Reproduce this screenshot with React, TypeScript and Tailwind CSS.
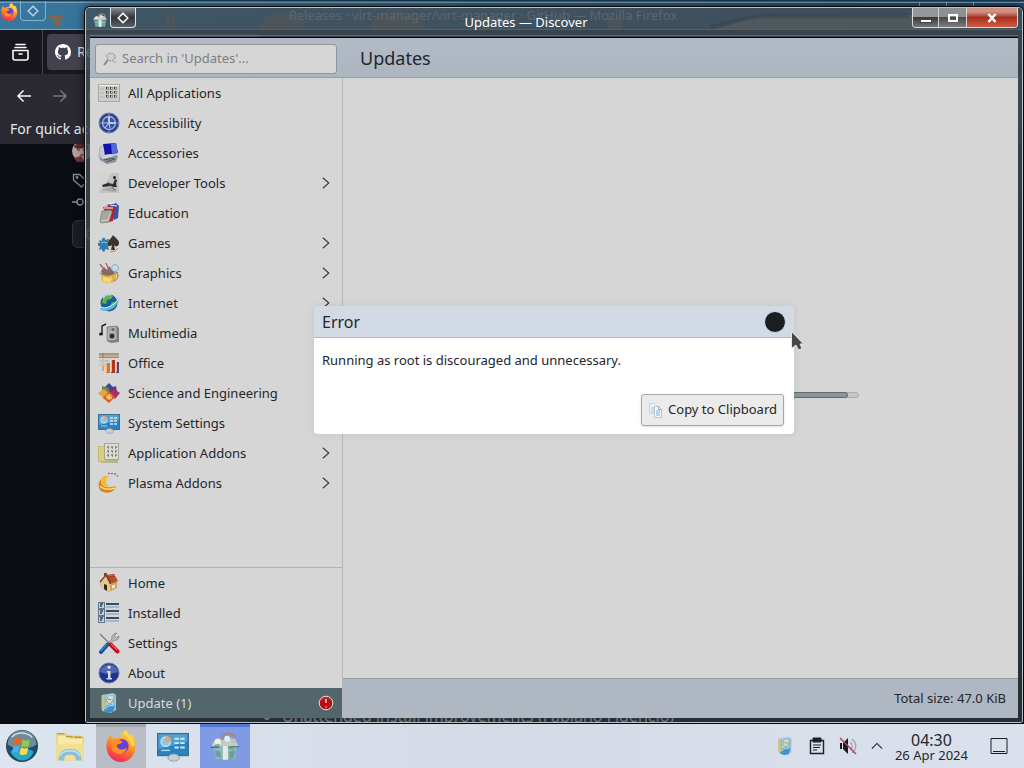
import React from 'react';

type IconProps = { name: string; className?: string };

const shapes: Record<string, React.ReactNode> = {
  grid: (
    <>
      <rect x="0.5" y="2.5" width="21" height="17" fill="#cdccc8" stroke="#a9a8a2" />
      <path d="M1 3.5h20" stroke="#f2f2ee" />
      <path d="M2 7h4M2 11h4M2 15h4" stroke="#aeb4bb" />
      {[6, 10, 14].map((y) =>
        [8, 12, 16].map((x) => (
          <g key={`${x}-${y}`}>
            <rect x={x} y={y - 1} width="3" height="3" fill="#96907f" />
            <rect x={x} y={y - 1} width="1" height="2" fill="#35353a" />
            <rect x={x + 1} y={y} width="1" height="1" fill="#d9cfa5" />
          </g>
        )),
      )}
    </>
  ),
  access: (
    <>
      <circle cx="11" cy="11" r="10" fill="#2c4390" stroke="#6d7dae" />
      <circle cx="11" cy="11" r="6.5" fill="#3353a3" stroke="#a9b8dc" strokeWidth="1.3" />
      <path d="M11 5v6h6" stroke="#e6ecf8" strokeWidth="1.6" fill="none" />
      <path d="M11 11l-4 5M5 11h6l1 5" stroke="#b9c6e4" strokeWidth="1.1" fill="none" />
      <path d="M11 1v3M11 18v3M1 11h3M18 11h3" stroke="#7f90c4" />
    </>
  ),
  accessories: (
    <>
      <path d="M2 5l5-2v10l-6 2z" fill="#c3ccd9" stroke="#8c96a5" strokeWidth=".6" />
      <path d="M5 2l13-1 2 10-13 2z" fill="#1014a6" />
      <path d="M13 1.5l5-.5 2 10-6 1z" fill="#5068dc" />
      <path d="M1 14l12-2 7 2-2 6-9 2-7-4z" fill="#8b929b" />
      <path d="M1 14l12-2 4 2-12 3z" fill="#ccd2d9" />
      <path d="M6 18l10-2M8 20l9-3" stroke="#52565d" />
    </>
  ),
  dev: (
    <>
      <rect x="1" y="1" width="20" height="20" fill="#c3c3c1" />
      <path d="M1 1h13L3 18H1z" fill="#d3d3d1" />
      <path d="M4 13l6-2 5 1 2-5 2 1-1 4 1 3-3 0-3-1-8 1z" fill="#2b2d2e" />
      <path d="M3 18l9-3 8 3-3 2z" fill="#a4a8aa" />
      <circle cx="16.500" cy="5.500" r="1.500" fill="#222" />
      <path d="M10 10l7 8" stroke="#555a5b" />
    </>
  ),
  education: (
    <>
      <path d="M9 2l9-1 3 3-1 12-4 2z" fill="#3453a4" />
      <path d="M9 2l8-1M12 3l7 1" stroke="#eef1f8" />
      <path d="M5 5l9-1 3 2-2 13-4 1z" fill="#b7242e" />
      <path d="M6 6l9 0" stroke="#fff" />
      <path d="M4 9l8-1 2 1-3 11-8 1-1-2z" fill="#a6a79f" stroke="#777b76" strokeWidth=".7" />
      <path d="M3 19l7-1 3-8" stroke="#d3d3cd" fill="none" />
    </>
  ),
  games: (
    <>
      <path d="M9 12c-1-4 4-8 9-6 4 3 2 12-3 14-3 0-6-3-6-8z" fill="#dcd6bf" />
      <path d="M1 8l3 1c-1-4 4-4 3-1l4-1-1 4c4-1 4 4 0 3l1 4-4-1c1 4-4 3-3 0l-3 1 1-4c-4 0-3-4 0-3z" fill="#347cae" />
      <path d="M3 11l3-1 3 1" stroke="#8dc3df" fill="none" />
      <path d="M15 3c2 3 7 5 6 9-1 3-4 3-5 1l1 5h-4l1-5c-2 2-5 1-4-2 0-3 4-5 5-8z" fill="#39352c" />
      <path d="M12 20l5-1 3-3" stroke="#c28b3c" fill="none" />
    </>
  ),
  graphics: (
    <>
      <path d="M3 9l3-4 3 3 2-4 3 4 3-2 1 3-4 4H5z" fill="#73688a" />
      <path d="M2 2l7 9M8 1l4 9M5 8l8 3" stroke="#a3664e" strokeWidth="1.300" />
      <circle cx="17" cy="6" r="3.500" fill="#c4dce6" stroke="#8db0c0" />
      <path d="M3 11c4 3 12 3 16-1l-2 9c-4 3-10 3-13 0z" fill="#dfb246" />
      <path d="M5 14c3 2 7 2 9 1l-1 5c-3 1-6 1-8-1z" fill="#f1d87e" />
      <path d="M2 11c6 4 13 2 17-1 2 4 1 7-3 9" stroke="#9c7224" fill="none" />
    </>
  ),
  internet: (
    <>
      <circle cx="11" cy="11" r="8.5" fill="#155f9d" />
      <path d="M5 6c3-4 8-4 10-2l-2 3-4 1-1 4-4-1zM14 10l4 0-1 5-4 3-1-4z" fill="#65ad52" />
      <path d="M5 6c2-3 5-4 8-3" stroke="#a3dbee" strokeWidth="1.5" fill="none" />
      <path d="M2 15c5 3 17-3 18-9 3 5-7 13-13 13-3 0-5-1-5-4z" fill="#5cb8df" />
      <path d="M2 15c6 3 15-2 18-8" stroke="#d9f2fb" fill="none" />
    </>
  ),
  multimedia: (
    <>
      <path d="M9 5l10-1 2 2v14l-8 1-4-2z" fill="#7d8082" />
      <path d="M9 5l10-1v14l-10 1z" fill="#a9acad" stroke="#74777a" strokeWidth=".7" />
      <circle cx="14" cy="14" r="3.600" fill="#55595c" stroke="#d4d5d6" />
      <circle cx="14" cy="14" r="1.500" fill="#17191a" />
      <circle cx="15" cy="7.500" r="1.500" fill="#65696b" />
      <path d="M4 12V4l4-2" stroke="#222" strokeWidth="1.400" fill="none" />
      <ellipse cx="3" cy="12" rx="2" ry="1.600" fill="#222" />
    </>
  ),
  office: (
    <>
      <path d="M1 1h20v4H1z" fill="#bfae90" />
      <path d="M1 5.500h20M1 2h20M1 9h9M1 13h7M5 1v18" stroke="#8d7a61" strokeWidth=".8" />
      <path d="M1 6h7v8H1z" fill="#d8cfc0" opacity=".7" />
      <path d="M8 11h4v10H8z" fill="#de7626" />
      <path d="M13 8h4v13h-4z" fill="#b43224" />
      <path d="M18 10h3v11h-3z" fill="#354f93" />
      <path d="M8.500 11v9M13.500 8v12M18.500 10v10" stroke="#f3b37b" />
    </>
  ),
  science: (
    <>
      <path d="M11 1l5 5-5 6-5-6z" fill="#344c9b" />
      <path d="M4 4l7 2v7l-7-3z" fill="#7a8151" />
      <path d="M18 4l-6 2v7l7-3z" fill="#5d3a85" />
      <path d="M0 11l6-4 6 5-6 5z" fill="#ddab36" />
      <path d="M22 11l-6-4-5 5 6 5z" fill="#a82d69" />
      <path d="M11 9l6 6-6 6-6-5z" fill="#d95a28" />
      <circle cx="11" cy="15" r="3" fill="#f19b38" />
      <path d="M11 12v5M8 15l6 1" stroke="#ffe2a0" strokeWidth=".8" />
    </>
  ),
  system: (
    <>
      <rect x="0.5" y="2.5" width="21" height="15" fill="#2b83bd" stroke="#3a6f98" />
      <path d="M1 3h20v5L1 13z" fill="#51a0cf" />
      <circle cx="6" cy="8" r="3.200" fill="#8cc6e4" stroke="#c4e3f2" />
      <path d="M6 8V4c2 0 4 2 4 4z" fill="#e0a573" />
      <path d="M12 6h7M12 9h7M12 12h7" stroke="#cfe9f6" strokeWidth="1.300" strokeDasharray="3 1" />
      <path d="M3 14h6" stroke="#a9d5ea" />
      <path d="M7.500 19.500c0-4 8-4 8 0-1 2.500-7 2.500-8 0z" fill="#c5d0d5" stroke="#8796a0" strokeWidth=".6" />
    </>
  ),
  appAddon: (
    <>
      <path d="M0 4h9v16H0z" fill="#c4bd65" />
      <path d="M1 5h7v14H1z" fill="#d6d083" />
      <rect x="6.5" y="1.5" width="14" height="16" fill="#dcdcd1" stroke="#a5a698" />
      {[5, 9, 13].map((y) => (
        <path key={y} d={`M9 ${y}h2M13 ${y}h2M17 ${y}h2M10 ${y + 1}h1M14 ${y + 1}h1M17 ${y + 1}h1`} stroke="#555751" />
      ))}
      <path d="M10 18h10v3H2" fill="#b5b68e" />
    </>
  ),
  plasma: (
    <>
      <path d="M3 7c-1 8 6 10 15 7-1 7-11 9-16 4-2-3-2-8 1-11z" fill="#de8317" />
      <path d="M3 8c0-4 4-5 8-4-4 3-4 7 0 10-4 2-8-1-8-6z" fill="#f5ba35" />
      <path d="M2 14c4 4 9 4 15 2" stroke="#ffe170" fill="none" strokeWidth="1.500" />
      <circle cx="11" cy="1.500" r=".8" fill="#383838" />
      <circle cx="14" cy="1.500" r=".8" fill="#b22" />
      <circle cx="17" cy="2" r=".8" fill="#383838" />
      <circle cx="19.500" cy="4" r=".8" fill="#39864b" />
    </>
  ),
  home: (
    <>
      <path d="M2 10l7-5 10 3v8l-8 4-8-4z" fill="#cba468" />
      <path d="M3 10l5-6 4 7v9l-9-4z" fill="#e3c897" />
      <path d="M8 3l8-1 4 7-8 3z" fill="#a84425" />
      <path d="M2 10l6-7 4.500 9" stroke="#7b3420" strokeWidth="1.200" fill="none" />
      <path d="M10 4l7-1M12 7l6-1M13 10l6-2" stroke="#c96e49" strokeWidth=".8" />
      <path d="M6 12l3 1v6l-3-2z" fill="#30281f" />
      <path d="M14 13.500l3-1v3l-3 1z" fill="#fff0b4" />
      <path d="M6 1h3v3H6z" fill="#953d22" />
    </>
  ),
  installed: (
    <>
      {[1, 8, 15].map((y) => (
        <g key={y}>
          <rect x="0.5" y={y - 0.5} width="6" height="6" fill="#c4ced8" stroke="#627789" />
          <path d={`M2 ${y + 1}h3M2 ${y + 3}h2`} stroke="#344b60" strokeWidth="1.500" />
          <path d={`M8 ${y + 1}h13`} stroke="#304f70" strokeWidth="2" />
          <path d={`M8 ${y + 4}h13`} stroke="#8097aa" />
        </g>
      ))}
    </>
  ),
  settings: (
    <>
      <path d="M2 2l9 9" stroke="#777b7c" strokeWidth="1.200" />
      <path d="M19 1l-3 3 2 2 3-2c0 4-3 5-5 4l-5 6-2-2 5-5c-1-3 2-6 5-6z" fill="#b8bdbf" stroke="#72787b" strokeWidth=".7" />
      <path d="M9.500 12.500L3 20" stroke="#1554a2" strokeWidth="4" strokeLinecap="round" />
      <path d="M9 12l-6 7" stroke="#6798d0" />
      <path d="M12.500 12.500l7 7" stroke="#bf151d" strokeWidth="4" strokeLinecap="round" />
      <path d="M13 12l6 6" stroke="#ee7972" />
    </>
  ),
  about: (
    <>
      <circle cx="11" cy="11" r="10" fill="#1d338d" stroke="#6679af" />
      <path d="M2 10c2-10 16-10 18 0-5 2-12 3-18 0z" fill="#5268b0" />
      <circle cx="11" cy="5.300" r="1.500" fill="#e8ecf7" />
      <path d="M9 9h3.500v7H14v1.500H8.500V16H10v-5.500H9z" fill="#dae0f2" />
    </>
  ),
  update: (
    <>
      <path d="M4 3l11-2 3 2v15l-5 3-9-2z" fill="#9bc7df" />
      <path d="M3.500 3l3 2v15l-3-3z" fill="#cdc27b" />
      <path d="M6 5l11-2v15L8 20z" fill="#86b9d4" />
      <path d="M8 5l7-1.500v8L8 13z" fill="#d1dbcf" />
      <path d="M9 7a3 3 0 1 0 5 0M9 5l1 2.500h3" stroke="#8aa58d" fill="none" />
      <path d="M6 19.500c0-5 5-8 11-6l-2 6.500-5 1z" fill="#3f93cc" />
      <path d="M7 17c3-4 6-3 9-4" stroke="#c9ebfa" fill="none" />
    </>
  ),
  discover: (
    <>
      <path d="M3 12l8-1 8 1-1 8H5z" fill="#8fb9b6" />
      <path d="M2 11c0-4 5-6 9-4 4-3 8-1 9 4z" fill="#bccfc9" />
      <path d="M9.500 11h3.500v9.500H9.500z" fill="#e3ebe9" />
      <path d="M4 14l4 1v4l-3-1zM14 15l4-1-1 5-3 1z" fill="#6f9f9b" />
      <path d="M9 7c-1-5 7-6 9-2" stroke="#a98783" fill="none" strokeWidth="1.500" />
      <circle cx="6" cy="8" r="2.200" fill="#f0f3d9" />
      <circle cx="12.500" cy="6" r="2" fill="#e6ecef" />
      <circle cx="17" cy="7.500" r="1.600" fill="#d0beb2" />
      <path d="M1 12h6M14 11.500h7" stroke="#3f7883" strokeWidth=".8" />
      <path d="M4 11l3-1M13 12l4 1" stroke="#77a060" strokeWidth="1.200" />
    </>
  ),
  firefox: (
    <>
      <defs>
        <linearGradient id="foxFire" x1="0.7" y1="0" x2="0.3" y2="1">
          <stop offset="0" stopColor="#ffe14a" />
          <stop offset=".45" stopColor="#ff9226" />
          <stop offset=".75" stopColor="#ff4d3c" />
          <stop offset="1" stopColor="#e42b70" />
        </linearGradient>
      </defs>
      <path d="M14 0c1 2 2 3 4 4l1-1c1 2 2 5 2 8 0 6-4 11-10 11S1 17 1 11c0-3 1-5 3-8l1 3 4-1 2 0c0-2 1-4 3-5z" fill="url(#foxFire)" />
      <circle cx="11.500" cy="11" r="4.800" fill="#6942c7" />
      <path d="M4 7c3-1 5-1 8 1-1 2-4 1-4 3 1 3 5 3 7 1-1 5-7 6-10 2-1-2-1-5-1-7z" fill="#ff8f24" />
      <path d="M14 1c1 4 5 5 5.500 10" stroke="#ffd94f" strokeWidth="2" fill="none" />
    </>
  ),
  start: (
    <>
      <circle cx="11" cy="11" r="10.5" fill="#15506f" stroke="#294755" />
      <path d="M1 10C2-3 20-3 21 10c-6 4-14 4-20 0z" fill="#6d8d9b" />
      <path d="M3 15c4 8 13 8 16 0-4-3-12-3-16 0z" fill="#27a8c9" />
      <path d="M6 6c2-1 3-1 4.500 0l-1 4.500c-2-1-3-1-4.500 0z" fill="#e86525" />
      <path d="M11.500 6.500c2 1 3.500 1 5 0l-1 4.500c-2 1-3.500 1-5 0z" fill="#91c94c" />
      <path d="M5 11.500c2-1 3-1 4.300 0l-1 4.500c-2-1-3-1-4.300 0z" fill="#4daeea" />
      <path d="M10.300 12c2 1 3.500 1 5 0l-1 4.500c-2 1-3.500 1-5 0z" fill="#ffdb4c" />
      <path d="M4 5C7 1 14 1 18 5" stroke="#e4f0f2" fill="none" opacity=".8" />
    </>
  ),
  folder: (
    <>
      <path d="M1.500 2h7l1 2h11v17h-19z" fill="#e6d27e" />
      <path d="M2.500 4h7l1 2h9v14h-17z" fill="#f8eba9" />
      <path d="M2 2.500h5M8 4.500h5M14 5h5" stroke="#b59c49" />
      <path d="M1.500 9.500h19V21h-19z" fill="#f0df95" />
      <path d="M3 21c0-6 3-8 8-8s8 2 8 8h-4c0-3-1-4-4-4s-4 1-4 4z" fill="#87bfdc" />
      <path d="M4 18c2-5 12-5 14 0" stroke="#c4e5f1" fill="none" />
    </>
  ),
};

function Icon({ name, className = 'size-5.5' }: IconProps) {
  return (
    <svg viewBox="0 0 22 22" className={`shrink-0 ${className}`} aria-hidden="true">
      {shapes[name]}
    </svg>
  );
}

function Chevron() {
  return (
    <svg viewBox="0 0 10 16" className="mr-3 h-4 w-2 shrink-0" fill="none" stroke="#3a3d3f" strokeWidth="1.500" aria-hidden="true">
      <path d="M1 1.500L8.500 8 1 14.500" />
    </svg>
  );
}

type Entry = { label: string; icon: string; more?: boolean };

const categories: Entry[] = [
  { label: 'All Applications', icon: 'grid' },
  { label: 'Accessibility', icon: 'access' },
  { label: 'Accessories', icon: 'accessories' },
  { label: 'Developer Tools', icon: 'dev', more: true },
  { label: 'Education', icon: 'education' },
  { label: 'Games', icon: 'games', more: true },
  { label: 'Graphics', icon: 'graphics', more: true },
  { label: 'Internet', icon: 'internet', more: true },
  { label: 'Multimedia', icon: 'multimedia' },
  { label: 'Office', icon: 'office' },
  { label: 'Science and Engineering', icon: 'science' },
  { label: 'System Settings', icon: 'system' },
  { label: 'Application Addons', icon: 'appAddon', more: true },
  { label: 'Plasma Addons', icon: 'plasma', more: true },
];

const pages: Entry[] = [
  { label: 'Home', icon: 'home' },
  { label: 'Installed', icon: 'installed' },
  { label: 'Settings', icon: 'settings' },
  { label: 'About', icon: 'about' },
];

function Row({ entry }: { entry: Entry }) {
  return (
    <button type="button" className="flex h-7.5 w-full items-center gap-2 pl-2 text-left">
      <Icon name={entry.icon} />
      <span className="flex-1 pt-0.5 whitespace-nowrap">{entry.label}</span>
      {entry.more && <Chevron />}
    </button>
  );
}

function Diamond({ className = '' }: { className?: string }) {
  return (
    <svg viewBox="0 0 12 12" className={`size-3 ${className}`} fill="none" stroke="currentColor" strokeWidth="1.500" aria-hidden="true">
      <path d="M6 1.200L10.800 6 6 10.800 1.200 6z" />
    </svg>
  );
}

function Browser() {
  return (
    <section className="absolute inset-0 flex flex-col overflow-hidden bg-[#090c13] text-[#e8e8ec]">
      <header className="relative flex h-7.5 shrink-0 items-start border-t border-b border-t-[#18384f] border-b-[#8ba4b5] bg-linear-to-r from-[#37789f] via-[#355c78] to-[#29476a]">
        <svg viewBox="0 0 1024 30" preserveAspectRatio="none" className="absolute inset-0 size-full" aria-hidden="true">
          <path d="M0 1.500h1024" stroke="#79a5bf" />
          <path d="M48 17c3-3 14-3 16 0l-4 4 2 5-8 3 1-6z" fill="#7d6555" />
          <path d="M260 30c2-22 43-22 46 0zM370 30c3-25 49-25 53 0zM480 30V18h10v12zM608 30V18h14v12z" fill="#a66c40" opacity=".6" />
          <path d="M166 12h3v18h-3zM172 12h3v18h-3z" fill="#a66c40" opacity=".6" />
          <path d="M710 30c20-3 30-12 60-14l140-1 50 15z" fill="#a08a70" opacity=".8" />
          <path d="M710 28c20-3 30-12 60-12h140" stroke="#101010" strokeWidth="5" fill="none" opacity=".5" />
          <path d="M919.5 1v10M946.5 1v10M973.5 1v10" stroke="#8fa6ba" />
        </svg>
        <Icon name="firefox" className="relative mt-0.5 size-4.5" />
        <button type="button" aria-label="On all desktops" className="relative ml-0.5 flex h-5 w-6.5 items-center justify-center rounded-b border border-t-0 border-[#84b1ca] text-[#b4d2e2]">
          <Diamond />
        </button>
        <span className="relative flex-1 pt-1 pr-26 text-center text-[13px] leading-5 text-[#b9c2c9]">
          Releases · virt-manager/virt-manager · GitHub — Mozilla Firefox
        </span>
      </header>
      <div className="flex h-11 shrink-0 bg-[#18171e]">
        <button type="button" aria-label="Recent browsing" className="flex w-10.5 shrink-0 items-center justify-center">
          <svg viewBox="0 0 20 20" className="size-5" fill="none" stroke="#fbfbfe" strokeWidth="1.600" aria-hidden="true">
            <path d="M5 2.500h9M4 5.500h11M2 8.500h15V16a2 2 0 0 1-2 2H4a2 2 0 0 1-2-2zM8 12h3" strokeLinejoin="round" strokeLinecap="round" />
          </svg>
        </button>
        <div className="flex w-56 items-center border-l border-[#45444b] p-1">
          <div className="flex h-9 flex-1 items-center gap-1.5 rounded bg-[#42414d] pl-2">
            <svg viewBox="0 0 16 16" className="size-4" fill="#fff" aria-hidden="true">
              <path d="M8 0C3.58 0 0 3.58 0 8c0 3.54 2.29 6.53 5.47 7.59.4.07.55-.17.55-.38 0-.19-.01-.82-.01-1.49-2.01.37-2.53-.49-2.69-.94-.09-.23-.48-.94-.82-1.13-.28-.15-.68-.52-.01-.53.63-.01 1.08.58 1.23.82.72 1.21 1.87.87 2.33.66.07-.52.28-.87.51-1.07-1.78-.2-3.64-.89-3.64-3.95 0-.87.31-1.59.82-2.15-.08-.2-.36-1.02.08-2.12 0 0 .67-.21 2.2.82.64-.18 1.32-.27 2-.27s1.36.09 2 .27c1.53-1.04 2.2-.82 2.2-.82.44 1.1.16 1.92.08 2.12.51.56.82 1.27.82 2.15 0 3.07-1.87 3.75-3.65 3.95.29.25.54.73.54 1.48 0 1.07-.01 1.93-.01 2.2 0 .21.15.46.55.38A8.01 8.01 0 0 0 16 8c0-4.42-3.58-8-8-8z" />
            </svg>
            <span className="text-sm">Releases</span>
          </div>
        </div>
      </div>
      <div className="flex h-11 shrink-0 items-center gap-5 bg-[#2b2a33] pl-4">
        <svg viewBox="0 0 16 16" className="size-4" fill="none" stroke="#fbfbfe" strokeWidth="1.500" aria-hidden="true">
          <path d="M15 8H2M7.500 2.500L2 8l5.500 5.500" />
        </svg>
        <svg viewBox="0 0 16 16" className="size-4" fill="none" stroke="#77767e" strokeWidth="1.500" aria-hidden="true">
          <path d="M1 8h13M8.500 2.500L14 8l-5.500 5.500" />
        </svg>
        <span className="size-4 rounded-full border border-[#77767e]" />
      </div>
      <p className="h-6.5 shrink-0 bg-[#2b2a33] pl-2.5 text-[14px] leading-5.5 whitespace-nowrap">
        For quick access, place your bookmarks here on the bookmarks toolbar.
      </p>
      <div className="flex flex-1 flex-col pl-18">
        <svg viewBox="0 0 20 20" className="size-5" aria-hidden="true">
          <circle cx="10" cy="7" r="10" fill="#b9a09a" />
          <path d="M2 3c2-5 11-6 15 0l-2 4-2-3-8 1z" fill="#5b2b28" />
          <path d="M5 6h3M11 6h3M8 11h4" stroke="#47312f" />
          <path d="M2 14l7-2 4 6H5z" fill="#74333b" />
        </svg>
        <svg viewBox="0 0 16 16" className="mt-2 size-4" fill="none" stroke="#868d96" strokeWidth="1.300" aria-hidden="true">
          <path d="M1.500 2.500h6L15 9.500 9.500 15 1.500 8z" />
          <circle cx="5" cy="5.500" r=".8" />
        </svg>
        <svg viewBox="0 0 16 16" className="mt-1.5 size-4" fill="none" stroke="#868d96" strokeWidth="1.400" aria-hidden="true">
          <circle cx="8" cy="8" r="3" />
          <path d="M0 8h5M11 8h5" />
        </svg>
        <button type="button" className="mt-2.5 h-7 w-24 rounded-md border border-[#30343b] bg-[#1a1d23] pl-3 text-left text-sm text-[#a0a5ab]">
          Compare
        </button>
        <ul className="mt-auto list-disc pl-52.5 text-base leading-4 text-white">
          <li>Unattended install improvements (Fabiano Fidêncio)</li>
        </ul>
      </div>
    </section>
  );
}

function TitleBar() {
  return (
    <header className="relative flex h-7 shrink-0 items-start justify-between border-b border-white/20">
      <div className="flex items-start pl-0.5">
        <Icon name="discover" className="mt-1 mr-0.5 size-4" />
        <button type="button" aria-label="Keep on all desktops" className="flex h-5 w-6.5 items-center justify-center rounded-b border border-t-0 border-[#dfe3e5] bg-linear-to-b from-[#858b8f] via-[#30363a] to-[#596066] text-white">
          <Diamond />
        </button>
      </div>
      <h1 className="absolute inset-x-0 top-1 mr-14 text-center text-[13px] leading-5 text-white">Updates — Discover</h1>
      <div className="flex h-5 overflow-hidden rounded-b border border-t-0 border-[#d9dcde]">
        <button type="button" aria-label="Minimize" className="flex w-6.5 items-center justify-center border-r border-[#d0d3d5] bg-linear-to-b from-[#92979a] from-45% via-[#383a3c] via-50% to-[#74787b]">
          <span className="mt-1.5 h-1 w-3 border border-[#444] bg-white" />
        </button>
        <button type="button" aria-label="Maximize" className="flex w-7 items-center justify-center border-r border-[#d0d3d5] bg-linear-to-b from-[#8b9093] from-45% via-[#484a4b] via-50% to-[#7b7d7e]">
          <span className="h-2 w-2.5 border-2 border-white" />
        </button>
        <button type="button" aria-label="Close" className="flex w-12.5 items-center justify-center bg-linear-to-b from-[#cf9184] from-20% via-[#a5301e] via-50% to-[#cf5a42]">
          <svg viewBox="0 0 10 10" className="size-2.5" stroke="#fff" strokeWidth="2.600" aria-hidden="true">
            <path d="M1.500 1l7 8M8.500 1l-7 8" />
          </svg>
        </button>
      </div>
    </header>
  );
}

function ErrorDialog() {
  return (
    <div className="absolute inset-0 flex items-center justify-center pb-4">
      <section role="dialog" aria-labelledby="error-title" className="relative w-120 rounded-b bg-white shadow-[0_0_8px_rgba(0,0,0,0.08)]">
        <header className="flex h-8 items-center justify-between border-b border-[#b3b8bc] bg-[#d2dae6] px-2">
          <h2 id="error-title" className="text-base">Error</h2>
          <button type="button" aria-label="Close" className="size-5.5 rounded-full border border-[#d2dae6] bg-[#1b1e22]" />
        </header>
        <p className="px-2 pt-3 leading-5">Running as root is discouraged and unnecessary.</p>
        <div className="flex justify-end pt-6 pr-2.5 pb-2">
          <button type="button" className="flex h-8 items-center gap-1 rounded-[3px] border border-[#a4a7aa] bg-[#ebebeb] px-1.5 shadow-sm">
            <svg viewBox="0 0 16 16" className="size-4" aria-hidden="true">
              <path d="M1.500 1.500h5l3 3v7h-8z" fill="#eef2f5" stroke="#ccd4db" />
              <path d="M3 6h3M3 8h3M3 10h3" stroke="#b3c8da" />
              <path d="M6.500 4.500h4l3 3v8h-7z" fill="#f6fafc" stroke="#b5c3d0" />
              <path d="M10.500 4.500v3h3M8 9h4M8 11h4M8 13h4" stroke="#86abcb" fill="none" />
            </svg>
            Copy to Clipboard
          </button>
        </div>
        <svg viewBox="0 0 14 22" className="absolute top-6 -right-2.5 h-5.5 w-3.5" aria-hidden="true">
          <path d="M1.500 1.500v17l4.500-3.500 2.500 5 3.500-1.500-2-4.500h3.500z" fill="#444746" stroke="#eee" strokeWidth=".9" />
        </svg>
      </section>
    </div>
  );
}

function Discover() {
  return (
    <section className="absolute top-2 right-0.5 bottom-0.5 left-21.5 flex flex-col rounded-t rounded-b-xs bg-linear-to-b from-[#42505acc] via-[#3b3c3fe0] to-[#343d42b3] px-1 pb-1 shadow-[0_0_0_1px_#b9c2c8,0_0_0_2px_#05080b,0_0_8px_2px_#0009]">
      <TitleBar />
      <div className="h-0.5 shrink-0 border-b border-black" />
      <div className="relative flex min-h-0 flex-1 flex-col bg-[#d6d6d6] text-[#232629]">
        <header className="flex h-10 shrink-0 items-center border-b border-[#98a0a7] bg-linear-to-b from-[#b3bac5] to-[#acb6c0]">
          <div className="w-63.5 shrink-0 pt-0.5 pl-1.25">
            <label className="flex h-7.5 w-60.5 items-center gap-1 rounded-[3px] border border-[#8e979e] bg-[#d6d6d6] pl-1.5">
              <svg viewBox="0 0 16 16" className="size-4 shrink-0" fill="none" aria-hidden="true">
                <circle cx="9" cy="6" r="4" fill="#cad1d3" stroke="#85898b" strokeDasharray="2 1" />
                <path d="M6 9l-4 5" stroke="#858789" strokeWidth="2" />
                <path d="M11 11h4M3 4h2" stroke="#b3b5b6" />
              </svg>
              <input type="search" aria-label="Search" placeholder="Search in 'Updates'..." className="min-w-0 flex-1 bg-transparent outline-none placeholder:text-[#7b7e81]" />
            </label>
          </div>
          <h2 className="pt-0.5 pl-4 text-[18px]">Updates</h2>
        </header>
        <div className="flex min-h-0 flex-1">
          <nav className="flex w-63.25 shrink-0 flex-col border-r border-[#b5b8ba]">
            <div className="flex-1">
              {categories.map((entry) => (
                <Row key={entry.label} entry={entry} />
              ))}
            </div>
            <div className="border-t border-[#b0b3b5]">
              {pages.map((entry) => (
                <Row key={entry.label} entry={entry} />
              ))}
              <button type="button" className="flex h-7.5 w-full items-center gap-2 bg-[#53666c] pr-2 pl-2 text-left text-[#d5dcde]">
                <Icon name="update" />
                <span className="flex-1 pt-0.5">Update (1)</span>
                <svg viewBox="0 0 16 16" className="size-4" aria-hidden="true">
                  <circle cx="8" cy="8" r="6.800" fill="#b50d16" stroke="#eee2dc" />
                  <path d="M8 4v4" stroke="#f8dcd8" strokeWidth="1.400" />
                  <circle cx="8" cy="12" r=".8" fill="#f0c9c7" />
                  <path d="M3 6c2-4 8-4 10 0" stroke="#c9403f" fill="none" />
                </svg>
              </button>
            </div>
          </nav>
          <main className="flex flex-1 flex-col">
            <div className="flex flex-1 items-center justify-center pt-8.5">
              <div role="progressbar" aria-label="Checking for updates" className="h-1.5 w-89 rounded-full border border-[#a9abac] bg-[#c6c7c7]">
                <div className="-mt-px h-1.5 w-86 rounded-full border border-[#5e6c70] bg-[#89979a]" />
              </div>
            </div>
            <footer className="flex h-10 items-center justify-end border-t border-[#969ea4] bg-[#afb7c2] pr-3">
              Total size: 47.0 KiB
            </footer>
          </main>
        </div>
        <ErrorDialog />
      </div>
    </section>
  );
}

function Taskbar() {
  return (
    <footer className="flex h-11 shrink-0 items-stretch justify-between bg-linear-to-r from-[#dce4ef] via-[#d4dbe7] to-[#dbe0ec] text-[#232629]">
      <div className="flex gap-0.5">
        <button type="button" aria-label="Start" className="flex w-11 items-center justify-center">
          <Icon name="start" className="size-8" />
        </button>
        <button type="button" aria-label="Files" className="flex w-12 items-center justify-center">
          <Icon name="folder" className="size-8" />
        </button>
        <button type="button" aria-label="Firefox" className="flex w-12.5 items-center justify-center border-t-3 border-[#a2a6ac] bg-[#b9bdc6]">
          <Icon name="firefox" className="mb-1 size-8" />
        </button>
        <button type="button" aria-label="System Settings" className="flex w-12.5 items-center justify-center">
          <Icon name="system" className="size-8" />
        </button>
        <button type="button" aria-label="Discover" className="flex w-12.5 items-center justify-center border-t-3 border-[#5577d2] bg-[#7e9be3]">
          <Icon name="discover" className="mb-1 size-8" />
        </button>
      </div>
      <div className="flex items-center">
        <div className="flex items-center gap-3.5">
          <Icon name="update" className="size-5" />
          <svg viewBox="0 0 16 18" className="h-4.5 w-4" fill="none" stroke="#1d2023" aria-hidden="true">
            <path d="M1.500 3.500h13v13h-13z" strokeWidth="1.400" />
            <path d="M4 1h8v4H4z" fill="#1d2023" />
            <path d="M4 8h8M4 10.500h7M4 13h4" strokeWidth="1.200" />
          </svg>
          <svg viewBox="0 0 18 18" className="size-4.5" aria-hidden="true">
            <path d="M1 6h2v6H1zM4 6l5-5v16l-5-5z" fill="#181b1e" />
            <path d="M11 5c3 2 3 6 0 8M13 2c5 4 5 10 0 14" stroke="#9fa4aa" fill="none" strokeWidth="1.300" />
            <path d="M1 1l16 16" stroke="#b8415a" strokeWidth="1.400" />
          </svg>
          <svg viewBox="0 0 14 8" className="h-2 w-3" fill="none" stroke="#232629" strokeWidth="1.300" aria-hidden="true">
            <path d="M1 7l6-6 6 6" />
          </svg>
        </div>
        <div className="ml-3 flex flex-col items-center pt-0.5 whitespace-nowrap">
          <span className="text-base leading-4">04:30</span>
          <span className="text-[13px] leading-3.5">26 Apr 2024</span>
        </div>
        <button type="button" aria-label="Show desktop" className="mr-4 ml-5.5 size-4.5">
          <svg viewBox="0 0 18 18" className="size-4.5" fill="none" stroke="#1b1e22" aria-hidden="true">
            <path d="M1 1.500h16v15H1zM3 14.500h12" />
          </svg>
        </button>
      </div>
    </footer>
  );
}

export default function App() {
  return (
    <div className="flex h-screen flex-col overflow-hidden font-['Noto_Sans',sans-serif] text-[13px]">
      <div className="relative min-h-0 flex-1 overflow-hidden">
        <Browser />
        <Discover />
      </div>
      <Taskbar />
    </div>
  );
}
